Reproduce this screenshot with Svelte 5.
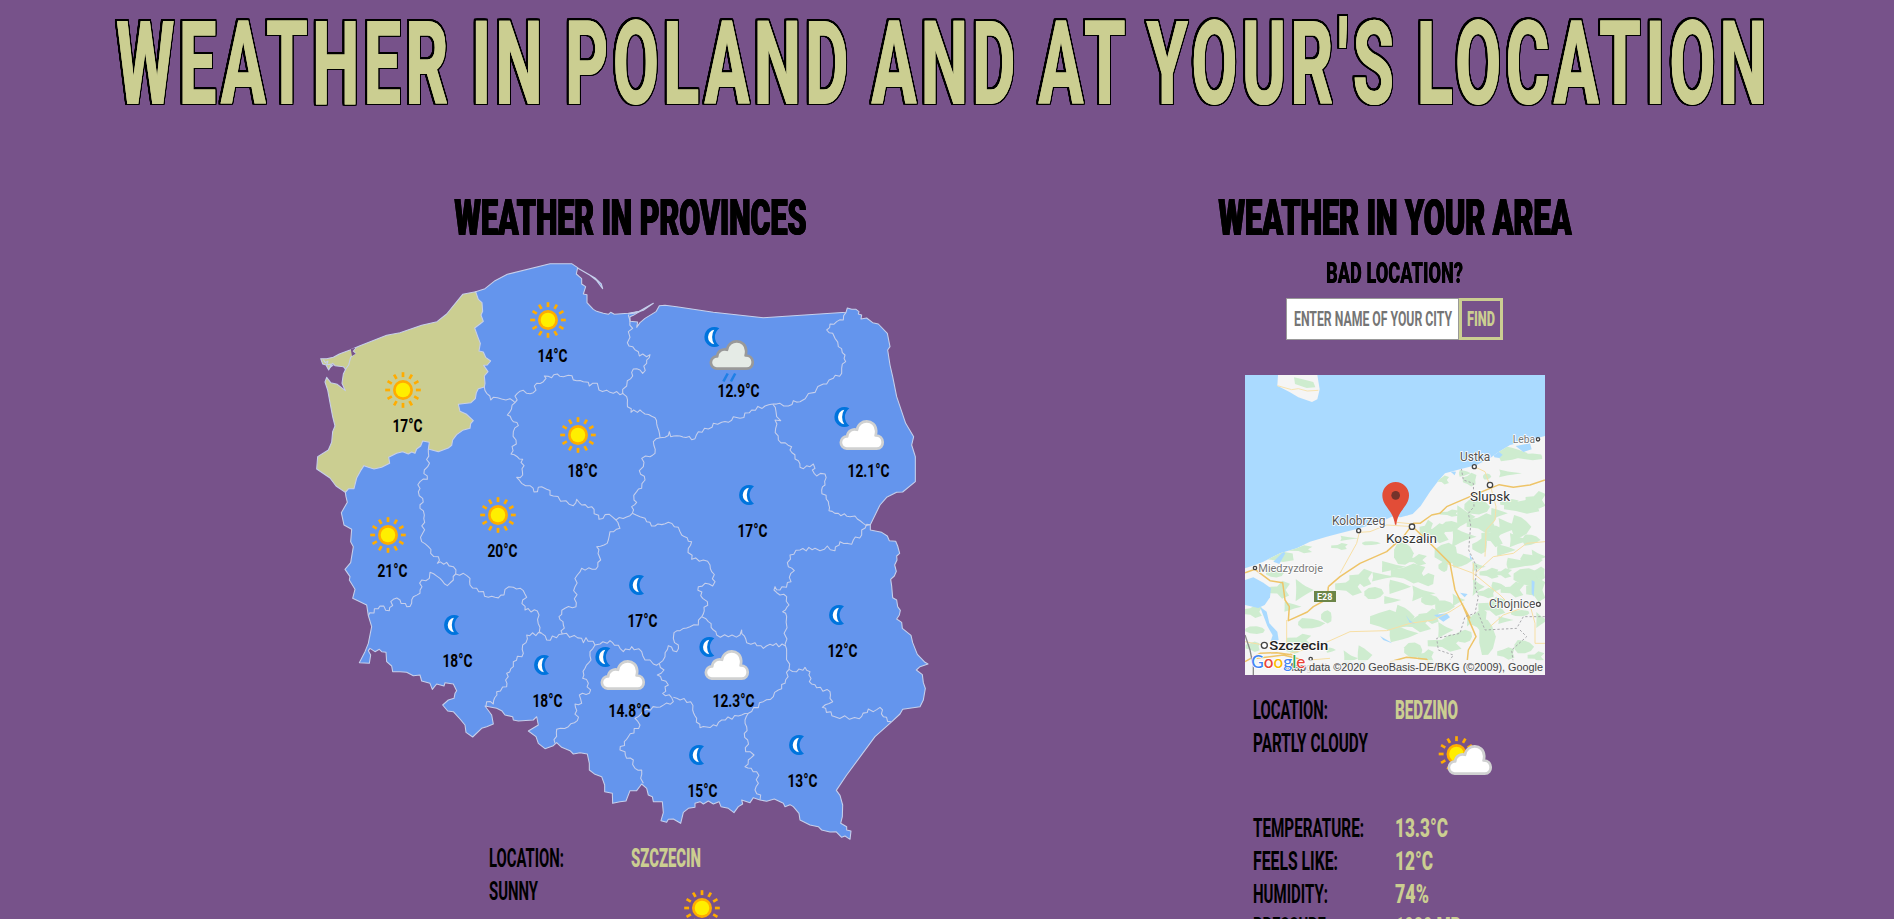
<script>
  const outline =
    '527,125 555,116 585,92 622,73 750,41 815,41 833,53 829,72 845,86 845,102 857,110 850,132 861,134 861,158 880,178 890,184 910,190 925,193 932,187 943,193 985,190 1020,184 1000,196 990,200 990,214 1013,216 1010,232 1020,218 1035,205 1068,185 1078,167 1095,166 1130,170 1240,187 1390,203 1638,187 1642,174 1655,178 1668,178 1677,185 1675,192 1685,195 1683,207 1700,204 1718,218 1735,222 1762,250 1770,290 1763,300 1770,345 1778,380 1790,440 1817,520 1841,560 1835,585 1846,620 1846,695 1808,726 1790,727 1760,742 1740,765 1711,824 1711,840 1745,847 1762,858 1768,872 1787,874 1793,888 1799,910 1790,918 1791,930 1784,945 1789,964 1783,978 1772,988 1775,1008 1778,1043 1790,1050 1793,1070 1801,1081 1798,1095 1790,1107 1805,1117 1807,1135 1833,1156 1838,1178 1852,1213 1875,1237 1884,1242 1860,1250 1849,1260 1867,1274 1870,1298 1876,1315 1870,1350 1860,1370 1808,1378 1800,1392 1773,1417 1725,1460 1640,1575 1609,1621 1620,1636 1628,1665 1627,1700 1622,1720 1640,1730 1640,1740 1653,1743 1650,1768 1635,1758 1625,1762 1608,1745 1590,1746 1565,1740 1555,1730 1530,1725 1500,1710 1497,1690 1480,1670 1470,1664 1455,1670 1450,1660 1423,1647 1400,1654 1380,1650 1360,1643 1350,1658 1325,1650 1328,1662 1315,1670 1302,1688 1285,1675 1263,1670 1257,1655 1240,1662 1225,1653 1210,1662 1200,1655 1185,1660 1185,1672 1165,1675 1150,1687 1142,1720 1120,1707 1105,1708 1100,1717 1083,1712 1090,1688 1087,1655 1060,1655 1057,1640 1045,1635 1040,1615 1025,1602 1010,1622 990,1622 978,1653 960,1655 938,1660 937,1630 914,1625 914,1605 905,1580 885,1573 868,1560 868,1540 862,1512 840,1508 820,1512 810,1502 785,1492 770,1478 760,1487 735,1496 715,1480 708,1460 685,1443 715,1425 710,1400 700,1410 655,1413 640,1410 638,1400 615,1395 605,1382 590,1375 555,1368 575,1395 580,1422 560,1430 545,1435 518,1461 498,1447 495,1425 480,1407 460,1385 443,1383 428,1365 445,1350 462,1345 465,1330 470,1322 460,1302 435,1298 432,1308 410,1302 397,1318 390,1300 365,1293 360,1275 340,1277 320,1267 300,1265 278,1265 275,1248 260,1235 258,1207 245,1205 238,1198 225,1205 210,1195 205,1202 212,1215 208,1240 178,1238 195,1205 205,1180 215,1130 205,1097 200,1065 158,1045 165,1018 148,990 150,980 135,958 152,938 160,890 152,875 155,838 132,825 124,788 142,757 138,740 136,727 180,600';

  const westPomerania =
    '62,326 80,326 100,322 118,312 150,300 180,287 260,256 300,248 365,226 411,215 440,192 488,133 527,125 535,148 546,158 548,184 543,195 550,214 540,222 524,234 534,262 541,280 537,303 550,306 557,322 572,333 562,345 551,346 564,365 553,378 555,400 553,411 535,416 529,428 526,446 513,458 475,463 480,484 500,493 520,512 512,521 510,535 488,541 470,554 458,570 455,586 445,594 415,605 385,597 388,577 368,573 362,588 350,597 345,610 335,606 325,612 308,605 290,610 266,622 269,640 245,652 222,657 205,652 192,647 182,662 170,684 162,716 146,716 136,727 108,708 90,684 50,657 53,620 85,600 95,577 98,545 105,528 98,500 90,458 83,420 75,396 80,382 92,398 112,403 136,422 126,400 130,372 137,358 130,350 105,347 98,340 86,360 78,345 68,342';

  const borders = [
    '553,411 560,430 572,450 580,442 605,447 630,446 645,458',
    '645,458 652,430 670,421 680,430 700,428 710,400 730,395 738,385 733,378 755,383 772,372 790,380 805,376 830,392 850,395 865,397 868,408 892,400 897,420 930,427 970,430',
    '985,195 990,212 998,235 985,245 990,262 982,278 998,290 1015,305 1018,318 1050,314 1040,340 1028,370 1020,360 1000,357 998,378 982,392 980,408 968,418 968,430',
    '968,430 980,440 982,460 993,487 1020,480 1035,492 1065,503 1072,530 1080,563',
    '1080,563 1095,562 1108,545 1112,560 1140,558 1185,566 1195,545 1225,537 1240,520 1265,517 1285,517 1300,500 1320,505 1355,480 1395,468 1418,462',
    '1418,462 1440,460 1465,468 1480,452 1500,455 1570,402 1580,402 1600,385 1625,370 1625,355 1637,335 1635,315 1615,290 1605,265 1598,250 1580,240 1590,222 1610,215 1630,210 1638,187',
    '1418,462 1428,485 1430,500 1442,512 1425,510 1427,535 1435,570 1455,578 1475,590 1470,600 1495,632 1500,652 1530,650 1540,642 1545,655 1537,660 1550,678 1575,672 1575,705 1565,720 1585,755 1587,782 1615,790 1650,800 1665,798 1690,820 1710,824',
    '1080,563 1060,575 1065,610 1050,620 1025,625 1030,650 1018,662 1035,690 1025,715 1010,725 1002,750 1010,757 995,770 997,790',
    '645,458 622,495 655,527 640,545 648,570 633,612 668,628 668,675 650,682 665,700 690,707 702,726 725,710 740,718 760,738 820,767 830,748 845,765 875,770 897,808 928,793 948,810 990,797 997,790',
    '997,790 1020,800 1035,805 1040,815 1065,828 1105,817 1135,832 1145,855 1175,875 1165,895 1175,928 1210,930 1230,945 1235,965 1245,995 1238,1008 1215,1000 1195,1010 1208,1045 1222,1055 1205,1100',
    '1205,1100 1195,1125 1170,1130 1140,1142 1122,1148 1120,1165 1135,1185 1130,1205 1105,1187 1095,1220 1078,1240',
    '1205,1100 1225,1115 1250,1155 1285,1160 1320,1155 1325,1140 1340,1178 1365,1178 1390,1195 1410,1183 1455,1187',
    '1710,824 1700,823 1685,840 1685,855 1660,870 1655,883 1620,875 1605,902 1582,888 1560,902 1545,895 1500,900 1470,915 1465,950 1483,962 1468,982 1473,995 1440,1020 1425,1010 1422,1020 1440,1035 1460,1040 1467,1065 1448,1085 1460,1100 1455,1183',
    '1455,1183 1467,1258',
    '1467,1258 1490,1265 1515,1252 1530,1265 1528,1295 1550,1313 1590,1325 1590,1345 1598,1355 1567,1372 1605,1400 1678,1406 1705,1377 1720,1385 1740,1372 1750,1400 1773,1415',
    '1467,1258 1455,1300 1435,1320 1420,1340 1390,1355 1345,1390 1315,1398 1265,1410 1250,1428 1200,1433 1190,1405 1178,1380 1172,1355 1120,1342',
    '1078,1240 1092,1260 1072,1275 1085,1290 1105,1305 1088,1330 1115,1343',
    '1078,1240 1060,1242 1050,1230 1035,1230 1025,1205 995,1190 970,1205 960,1195 930,1172 900,1182 885,1185',
    '948,810 960,835 930,845 925,870 912,885 890,890 902,930 887,958 845,955 832,975 825,1010 828,1070 795,1075 777,1100 790,1125 787,1152',
    '725,1150 740,1170 787,1152 845,1165 850,1178 858,1163 885,1185',
    '885,1185 870,1205 873,1230 855,1255 848,1285 865,1300 868,1330 838,1335 845,1360 825,1362 832,1412 805,1430 770,1438 765,1480',
    '725,1150 680,1155 678,1178 668,1185 670,1210 640,1235 640,1250 620,1270 620,1310 590,1325 580,1362 560,1355 558,1368',
    '725,1150 718,1145 712,1083 675,1080 668,1050 680,1042 670,1022 640,1012 615,1018 612,1035 585,1042 565,1042 530,1015 510,1005 510,985 490,970 467,972',
    '385,597 383,650 373,660 382,688 360,695 355,725 368,745 360,775 373,795 368,850 365,875 385,890 392,910 415,920 412,940 440,937 460,950 467,972',
    '467,972 460,990 442,1007 420,985 390,967 388,985 365,990 360,1030 340,1040 335,1060 320,1070 300,1050 280,1048 268,1082 240,1068 205,1097',
    '1115,1343 1120,1355 1070,1372 1040,1378 1005,1405 1020,1425 985,1460 960,1500 975,1505 980,1525 1000,1530 1005,1555 1025,1560 1022,1585 1030,1600',
    '1345,1390 1335,1410 1340,1430 1333,1450 1343,1470 1337,1505 1362,1515 1345,1530 1335,1550 1370,1565 1375,1600 1365,1620 1382,1635 1380,1650'
  ];

  // Adds small kinks between the vertices so the borders follow a natural line.
  function rugged(points) {
    const p = points.split(' ').map((s) => s.split(',').map(Number));
    const out = [p[0]];
    for (let i = 1; i < p.length; i++) {
      const [ax, ay] = p[i - 1];
      const [bx, by] = p[i];
      const len = Math.hypot(bx - ax, by - ay);
      const n = Math.min(5, Math.floor(len / 9));
      for (let k = 1; k < n; k++) {
        const t = k / n;
        const d = Math.sin(ax * 1.7 + by * 2.3 + k * 2.6) * 5;
        out.push([ax + (bx - ax) * t - ((by - ay) / len) * d, ay + (by - ay) * t + ((bx - ax) / len) * d]);
      }
      out.push(p[i]);
    }
    return out.map((q) => q.map((v) => v.toFixed(1)).join(',')).join(' ');
  }

  const stations = [
    [548, 320, 'sun', '14°C'], [403, 390, 'sun', '17°C'], [578, 435, 'sun', '18°C'],
    [498, 515, 'sun', '20°C'], [388, 535, 'sun', '21°C'], [453, 625, 'moon', '18°C'],
    [543, 665, 'moon', '18°C'], [619, 675, 'cloud', '14.8°C'], [638, 585, 'moon', '17°C'],
    [723, 665, 'cloud', '12.3°C'], [748, 495, 'moon', '17°C'], [728, 355, 'rain', '12.9°C'],
    [858, 435, 'cloud', '12.1°C'], [838, 615, 'moon', '12°C'], [798, 745, 'moon', '13°C'],
    [698, 755, 'moon', '15°C']
  ];

  const area = [
    ['Temperature:', 111, '13.3°C', 53], ['Feels like:', 85, '12°C', 38],
    ['Humidity:', 75, '74%', 34], ['Pressure:', 77, '1020 mb', 66]
  ];

  const rays = Array.from({ length: 12 }, (_, i) => i * 30);

  const woods = [
    [150,590,40,12],[215,568,30,9],[330,560,26,10],[420,550,36,8],[350,535,30,7],[500,545,12,8],
    [75,810,26,10],[70,755,24,14],[150,690,30,22],[135,640,34,16],[180,740,30,16],[215,690,26,28],[240,790,36,14],
    [70,860,18,12],[210,840,32,14],[190,870,22,12],[300,870,18,10],[355,895,22,22],[400,885,20,24],[290,770,14,16],
    [360,680,34,20],[395,655,34,24],[430,700,38,24],[450,650,40,14],[480,620,34,14],[520,580,26,30],[540,640,44,22],
    [560,600,30,14],[590,660,30,22],[500,680,40,24],[570,700,34,20],[520,770,26,30],[470,780,40,24],[560,790,42,20],
    [600,770,34,22],[640,740,38,26],[680,720,20,18],[510,820,40,22],[550,870,24,20],[590,890,20,16],[650,850,50,22],
    [700,830,34,24],[720,780,16,20],[640,810,22,20],[770,830,22,50],[750,780,20,28],[790,740,36,22],[770,700,30,16],
    [800,680,26,18],[740,680,18,24],[690,600,28,20],[650,580,30,26],[620,520,34,22],[590,510,20,26],[660,500,34,22],
    [690,530,40,30],[700,470,26,28],[740,440,34,20],[760,490,38,22],[790,530,30,26],[750,560,28,26],[820,570,34,20],
    [830,500,36,22],[870,500,26,30],[880,440,46,16],[920,420,26,20],[840,430,30,12],[900,540,34,22],[920,590,24,20],
    [860,610,38,14],[890,650,34,22],[920,690,24,26],[850,690,34,20],[870,760,36,12],[820,780,26,12],[930,780,16,20],
    [880,860,26,18],[830,880,22,14],[920,890,22,12],[720,360,24,22],[700,340,22,12],[830,340,34,10],[840,280,40,20],
    [900,290,36,8],[640,360,16,10],[660,460,30,10],[770,350,16,12],[740,620,22,14],[480,720,24,10],[600,720,24,14],
    [780,640,24,12],[820,640,26,12],[640,620,18,20],[800,460,30,18],[860,540,30,18],[900,600,30,16],[930,640,14,16]
  ];

  function patch([cx, cy, rx, ry], i) {
    const pts = [];
    for (let k = 0; k < 9; k++) {
      const a = (k / 9) * Math.PI * 2;
      const r = 0.98 + 0.42 * Math.sin(i * 5.3 + k * k * 2.1);
      pts.push(`${(cx + Math.cos(a) * rx * r).toFixed(1)},${(cy + Math.sin(a) * ry * r).toFixed(1)}`);
    }
    return pts.join(' ');
  }

  const coast =
    'M45 625 L75 615 L100 605 L150 580 L200 565 L240 545 L290 530 L330 520 L380 507 L450 487 L485 470 L512 472 L548 462 L572 438 L600 395 L625 362 L645 340 L690 328 L740 315 L780 295 L800 280 L840 255 L880 245 L945 228 V945 H45Z';
</script>

{#snippet narrow(text, w, cap, cls)}
  <svg class="narrow {cls}" width={w} height={cap}>
    <text y={cap} font-size={cap / 0.711} textLength={w} lengthAdjust="spacingAndGlyphs">{text}</text>
  </svg>
{/snippet}

{#snippet sun()}
  {#each rays as a}
    <path d="M0 -12.9V-17.8" stroke="#ffac00" stroke-width="2.7" transform="rotate({a})" />
  {/each}
  <circle r="10" fill="#ffac00" />
  <circle r="7.3" fill="#ffee00" />
{/snippet}

{#snippet moon()}
  <path d="M6 -8.7A10 10 0 1 0 6 8.7Q1.6 5 1.6 0Q1.6 -5 6 -8.7Z" fill="#0074dd" />
  <path d="M.9 -7.3A7.4 7.4 0 0 0 .9 7.3Q-1.2 4 -1.2 0Q-1.2 -4 .9 -7.3Z" fill="#fff" />
{/snippet}

{#snippet icon(kind)}
  {#if kind === 'sun'}
    {@render sun()}
  {:else if kind === 'moon'}
    {@render moon()}
  {:else}
    {#if kind === 'partly'}
      <g transform="translate(-9.5 -6)">{@render sun()}</g>
    {:else}
      <g transform="translate(-14.7 -18)">{@render moon()}</g>
    {/if}
    {#if kind === 'rain'}
      <path d="M-.3 18.5L-4.6 26.5M7.2 18.5L2.9 26.5" stroke="#1f7fe6" stroke-width="2.6" />
    {/if}
    <path
      d="M-11.3 13.6A6.1 6.1 0 0 1 -10.8 1.4C-10.6 -3.6 -5.6 -6.8 -1 -5.2C.5 -16.5 17.5 -16.6 18.2 -4.2C18.3 -2.3 18 -.9 17.6 .5C26.8 .4 27 13.6 18.6 13.6Z"
      fill={kind === 'rain' ? '#e5ebe6' : '#fff'}
      stroke={kind === 'rain' ? '#999' : '#d0d1d1'}
      stroke-width="2.7"
      stroke-linejoin="round"
    />
  {/if}
{/snippet}

<div class="page">
  <h1>{@render narrow("Weather in Poland and at your's location", 1655, 83, 'title')}</h1>

  <main>
    <section class="provinces">
      <h2>{@render narrow('Weather in provinces', 352, 36, 'heading')}</h2>
      <svg class="poland" width="640" height="590" viewBox="0 0 1920 1770">
        <g stroke="#c6cfeb" stroke-width="3.2" stroke-linejoin="round">
          <polygon points={outline} fill="#6495ed" />
          {#each borders as b}
            <polyline points={rugged(b)} fill="none" />
          {/each}
          <path d="M834 55L870 76L890 92L908 116L904 102L885 84Z" fill="#6495ed" />
          <path d="M985 192L1018 184L1060 160L1030 181L1004 190Z" fill="#6495ed" />
          <polygon points={westPomerania} fill="#cbce91" />
          <path d="M168 292L160 303L166 310L152 322L146 345L135 360M70 329L76 338L84 333L80 345L94 342L90 352L100 345" fill="none" />
        </g>
        <path d="M152 297L166 293L158 304L167 311L156 318Z" fill="#77528a" />
        <g transform="translate(-900 -750) scale(3)">
          {#each stations as [x, y, kind, temp]}
            <g transform="translate({x} {y})">
              {@render icon(kind)}
              <text class="temp" x="-10.5" y="41.7" textLength={temp.length > 4 ? 42 : 30} lengthAdjust="spacingAndGlyphs">{temp}</text>
            </g>
          {/each}
        </g>
      </svg>

      <div class="info left">
        <div class="row"><div>{@render narrow('Location:', 75, 18, 'name')}</div><div>{@render narrow('Szczecin', 70, 18, 'value')}</div></div>
        <div class="row tall">
          <div>{@render narrow('Sunny', 49, 18, 'name')}</div>
          <svg class="icon" width="64" height="64" viewBox="-32 -32 64 64">{@render icon('sun')}</svg>
        </div>
      </div>
    </section>

    <section class="area">
      <h2>{@render narrow('Weather in your area', 353, 36, 'heading')}</h2>
      <h3>{@render narrow('Bad location?', 137, 21.5, 'sub')}</h3>
      <form>
        <label class="field">{@render narrow('Enter name of your city', 158, 14, 'hint')}</label>
        <button type="button">{@render narrow('Find', 28, 14, 'value')}</button>
      </form>

      <svg class="map" width="300" height="300" viewBox="45 45 900 900">
        <clipPath id="land"><path d={coast} /></clipPath>
        <rect x="45" y="45" width="900" height="900" fill="#aadaff" />
        <path d="M144 45L142 77L180 97L205 112L246 126L262 118L269 88L262 45Z" fill="#f5f5f5" />
        <path d="M192 52L215 57L250 66L256 82L230 84L195 72Z" fill="#ceeccf" />
        <path d="M142 77L185 89L205 86L232 93L265 91" fill="none" stroke="#f7e3b0" stroke-width="3" />
        <path d={coast} fill="#f5f5f5" />
        <g clip-path="url(#land)">
          {#each woods as w, i}
            <polygon points={patch(w, i)} fill="#ceeccf" />
          {/each}
          <g fill="#aadaff">
            <path d="M45 660L70 652L100 668L123 685L120 712L104 735L85 744L45 735Z" />
            <path d="M90 740L110 755L118 790L142 815L146 840L120 850L128 826L112 798Z" />
            <path d="M130 605L160 575L166 580L148 612Z" />
            <path d="M790 282L803 273L818 284L808 294L793 292ZM857 258L900 250L905 268L880 276ZM660 334L678 335L674 346Z" />
            <path d="M527 764L540 790L556 792L538 780ZM612 765L650 760L660 772L640 785ZM690 698L713 702L704 712ZM905 660L914 665L911 710L905 700ZM450 828L480 845L486 850L460 840ZM718 580L728 600L721 598ZM510 462L540 452L560 445L530 468Z" />
          </g>
          <g fill="none" stroke="#f7dfa5" stroke-width="3">
            <path d="M550 500L470 495L420 515L388 517L380 550L330 640M500 487L550 492M650 610L730 640L810 705L825 720M733 320L765 335L778 372M780 372L798 440L795 480L768 510L765 590M735 640L790 590L850 580L890 550L945 545M170 780L170 850M180 880L260 860L360 815L470 812L540 790L610 780L660 755L700 730M240 900L300 895M730 610V660M780 800L820 765L900 735L915 790V850H945M45 845L100 855M240 910L265 930" />
          </g>
          <g fill="none" stroke="#eec468" stroke-width="4.5" stroke-linejoin="round">
            <path d="M295 680L330 650L390 610L470 575L520 530L550 490L570 490L605 465L630 460L650 440L720 410L780 385L808 374L850 382L900 375L945 360" />
            <path d="M548 500L600 550L660 610L675 690L700 740L738 830L715 870L712 900M295 680L292 717L250 740L232 756L175 782L178 740L165 720L158 668L120 662L75 628L45 638M45 905L90 880L140 878L190 885M80 895L160 885L220 900M690 720L720 775M480 905L530 892L590 898L610 925" />
          </g>
          <g fill="none" stroke="#a9a9ad" stroke-width="3" stroke-dasharray="7 6">
            <path d="M694 325L700 360L730 370L732 440L715 460L722 495L716 570L740 620L735 680L745 710L735 760L705 770L690 820L620 835L625 870L670 885L660 900M745 760L765 810L860 805L880 770L945 770M870 810L890 830L845 870L850 910" />
          </g>
          <path d="M45 825L60 870L70 920V945" fill="none" stroke="#888" stroke-width="4" />
        </g>
        <g fill="#fff" stroke="#444" stroke-width="4">
          <circle cx="546" cy="500" r="8" /><circle cx="780" cy="375" r="8" />
          <circle cx="733" cy="320" r="6" /><circle cx="386" cy="512" r="6" />
          <circle cx="924" cy="238" r="5" /><circle cx="925" cy="733" r="6" />
          <circle cx="75" cy="624" r="5" /><circle cx="103" cy="856" r="9" /><circle cx="242" cy="897" r="5" />
        </g>
        <rect x="252" y="693" width="66" height="33" fill="#6c8548" />
        <text x="261" y="719" font-size="25" font-weight="700" fill="#fff" textLength="46" lengthAdjust="spacingAndGlyphs">E28</text>
        <g class="labels">
          <text x="468" y="549" font-size="40" fill="#333" textLength="153" lengthAdjust="spacingAndGlyphs">Koszalin</text>
          <text x="720" y="423" font-size="40" fill="#333" textLength="120" lengthAdjust="spacingAndGlyphs">Slupsk</text>
          <text x="690" y="304" font-size="37" fill="#555" textLength="91" lengthAdjust="spacingAndGlyphs">Ustka</text>
          <text x="306" y="496" font-size="36" fill="#555" textLength="160" lengthAdjust="spacingAndGlyphs">Kolobrzeg</text>
          <text x="848" y="249" font-size="33" fill="#777" textLength="67" lengthAdjust="spacingAndGlyphs">Leba</text>
          <text x="85" y="636" font-size="34" fill="#777" textLength="194" lengthAdjust="spacingAndGlyphs">Miedzyzdroje</text>
          <text x="777" y="745" font-size="36" fill="#555" textLength="139" lengthAdjust="spacingAndGlyphs">Chojnice</text>
          <text x="118" y="871" font-size="41" font-weight="500" fill="#222" textLength="177" lengthAdjust="spacingAndGlyphs">Szczecin</text>
          <text x="170" y="934" font-size="32" fill="#777">Stargard</text>
        </g>
        <rect x="165" y="900" width="780" height="45" fill="#f5f5f5" fill-opacity=".78" />
        <text class="credit" x="165" y="932" textLength="774" lengthAdjust="spacingAndGlyphs">Map data ©2020 GeoBasis-DE/BKG (©2009), Google</text>
        <text class="logo" x="64" y="925" textLength="162" lengthAdjust="spacingAndGlyphs"><tspan fill="#4285f4">G</tspan><tspan fill="#ea4335">o</tspan><tspan fill="#fbbc05">o</tspan><tspan fill="#4285f4">g</tspan><tspan fill="#34a853">l</tspan><tspan fill="#ea4335">e</tspan></text>
        <path d="M495 494C490 450 457 440 457 406A40 40 0 0 1 537 406C537 440 503 450 499 494Z" fill="#e24d37" />
        <circle cx="497" cy="406" r="13" fill="#75332b" />
      </svg>

      <div class="info right">
        <div class="row"><div>{@render narrow('Location:', 75, 18, 'name')}</div><div>{@render narrow('Bedzino', 63, 18, 'value')}</div></div>
        <div class="row tall">
          <div>{@render narrow('Partly cloudy', 115, 18, 'name')}</div>
          <svg class="icon" width="64" height="64" viewBox="-32 -32 64 64">{@render icon('partly')}</svg>
        </div>
        {#each area as [name, nw, value, vw]}
          <div class="row"><div>{@render narrow(name, nw, 18, 'name')}</div><div>{@render narrow(value, vw, 18, 'value')}</div></div>
        {/each}
      </div>
    </section>
  </main>
</div>

<style>
  :global(body) { background: #77528a; overflow: hidden; }
  .page { height: 919px; overflow: hidden; font-family: Roboto, sans-serif; }
  h1, h2, h3 { margin: 0; font-size: 0; display: flex; justify-content: center; }
  h1 { padding-top: 21px; margin-right: 8px; }
  main { display: grid; grid-template-columns: 998px 530px; margin: 95px 0 0 132px; }
  section { display: flex; flex-direction: column; align-items: center; }

  .narrow { display: block; overflow: visible; font-family: Roboto, sans-serif; font-weight: 700; text-transform: uppercase; }
  .title { font-weight: 800; letter-spacing: 7px; word-spacing: -4px; fill: #cbce91; filter: drop-shadow(.8px 0 0 #cbce91) drop-shadow(1.8px 0 0 #000) drop-shadow(-1.8px 0 0 #000) drop-shadow(0 1.6px 0 #000) drop-shadow(0 -1.6px 0 #000); }
  .heading { font-weight: 900; fill: #000; filter: drop-shadow(.4px 0 0 #000) drop-shadow(-.4px 0 0 #000); }
  .sub { font-weight: 900; filter: drop-shadow(.4px 0 0 #000); }
  .value { fill: #cbce91; font-weight: 900; }
  .hint { fill: #757575; }
  .temp { font-size: 19px; font-weight: 700; }

  .poland { align-self: flex-start; margin: 15px 0 0 168px; }
  .info { align-self: flex-start; }
  .left { margin: 1.5px 0 0 357px; }
  .right { margin: 18.5px 0 0 123px; }
  .row { display: grid; grid-template-columns: 142px 142px; height: 33px; }
  .row > div { height: 33px; display: flex; align-items: center; }
  .tall { height: 84.5px; }
  .icon { margin: 1.5px 0 0 39px; overflow: visible; }

  h3 { margin: 26px 1px 0 0; }
  form { display: flex; margin: 15.5px 2px 35px 0; height: 42px; }
  .field { box-sizing: border-box; width: 173px; border: 1px solid #999; background: #fff; display: flex; align-items: center; padding-left: 7px; }
  button { box-sizing: border-box; width: 44px; border: 3px solid #cbce91; background: none; padding: 0; display: flex; align-items: center; justify-content: center; }
  .map { display: block; }
  .labels text { paint-order: stroke; stroke: #fff; stroke-width: 5px; stroke-linejoin: round; }
  .credit { font: 30px "Liberation Sans", sans-serif; fill: #444; }
  .logo { font: 500 54px Lato, sans-serif; paint-order: stroke; stroke: #fff; stroke-width: 5px; }
</style>
